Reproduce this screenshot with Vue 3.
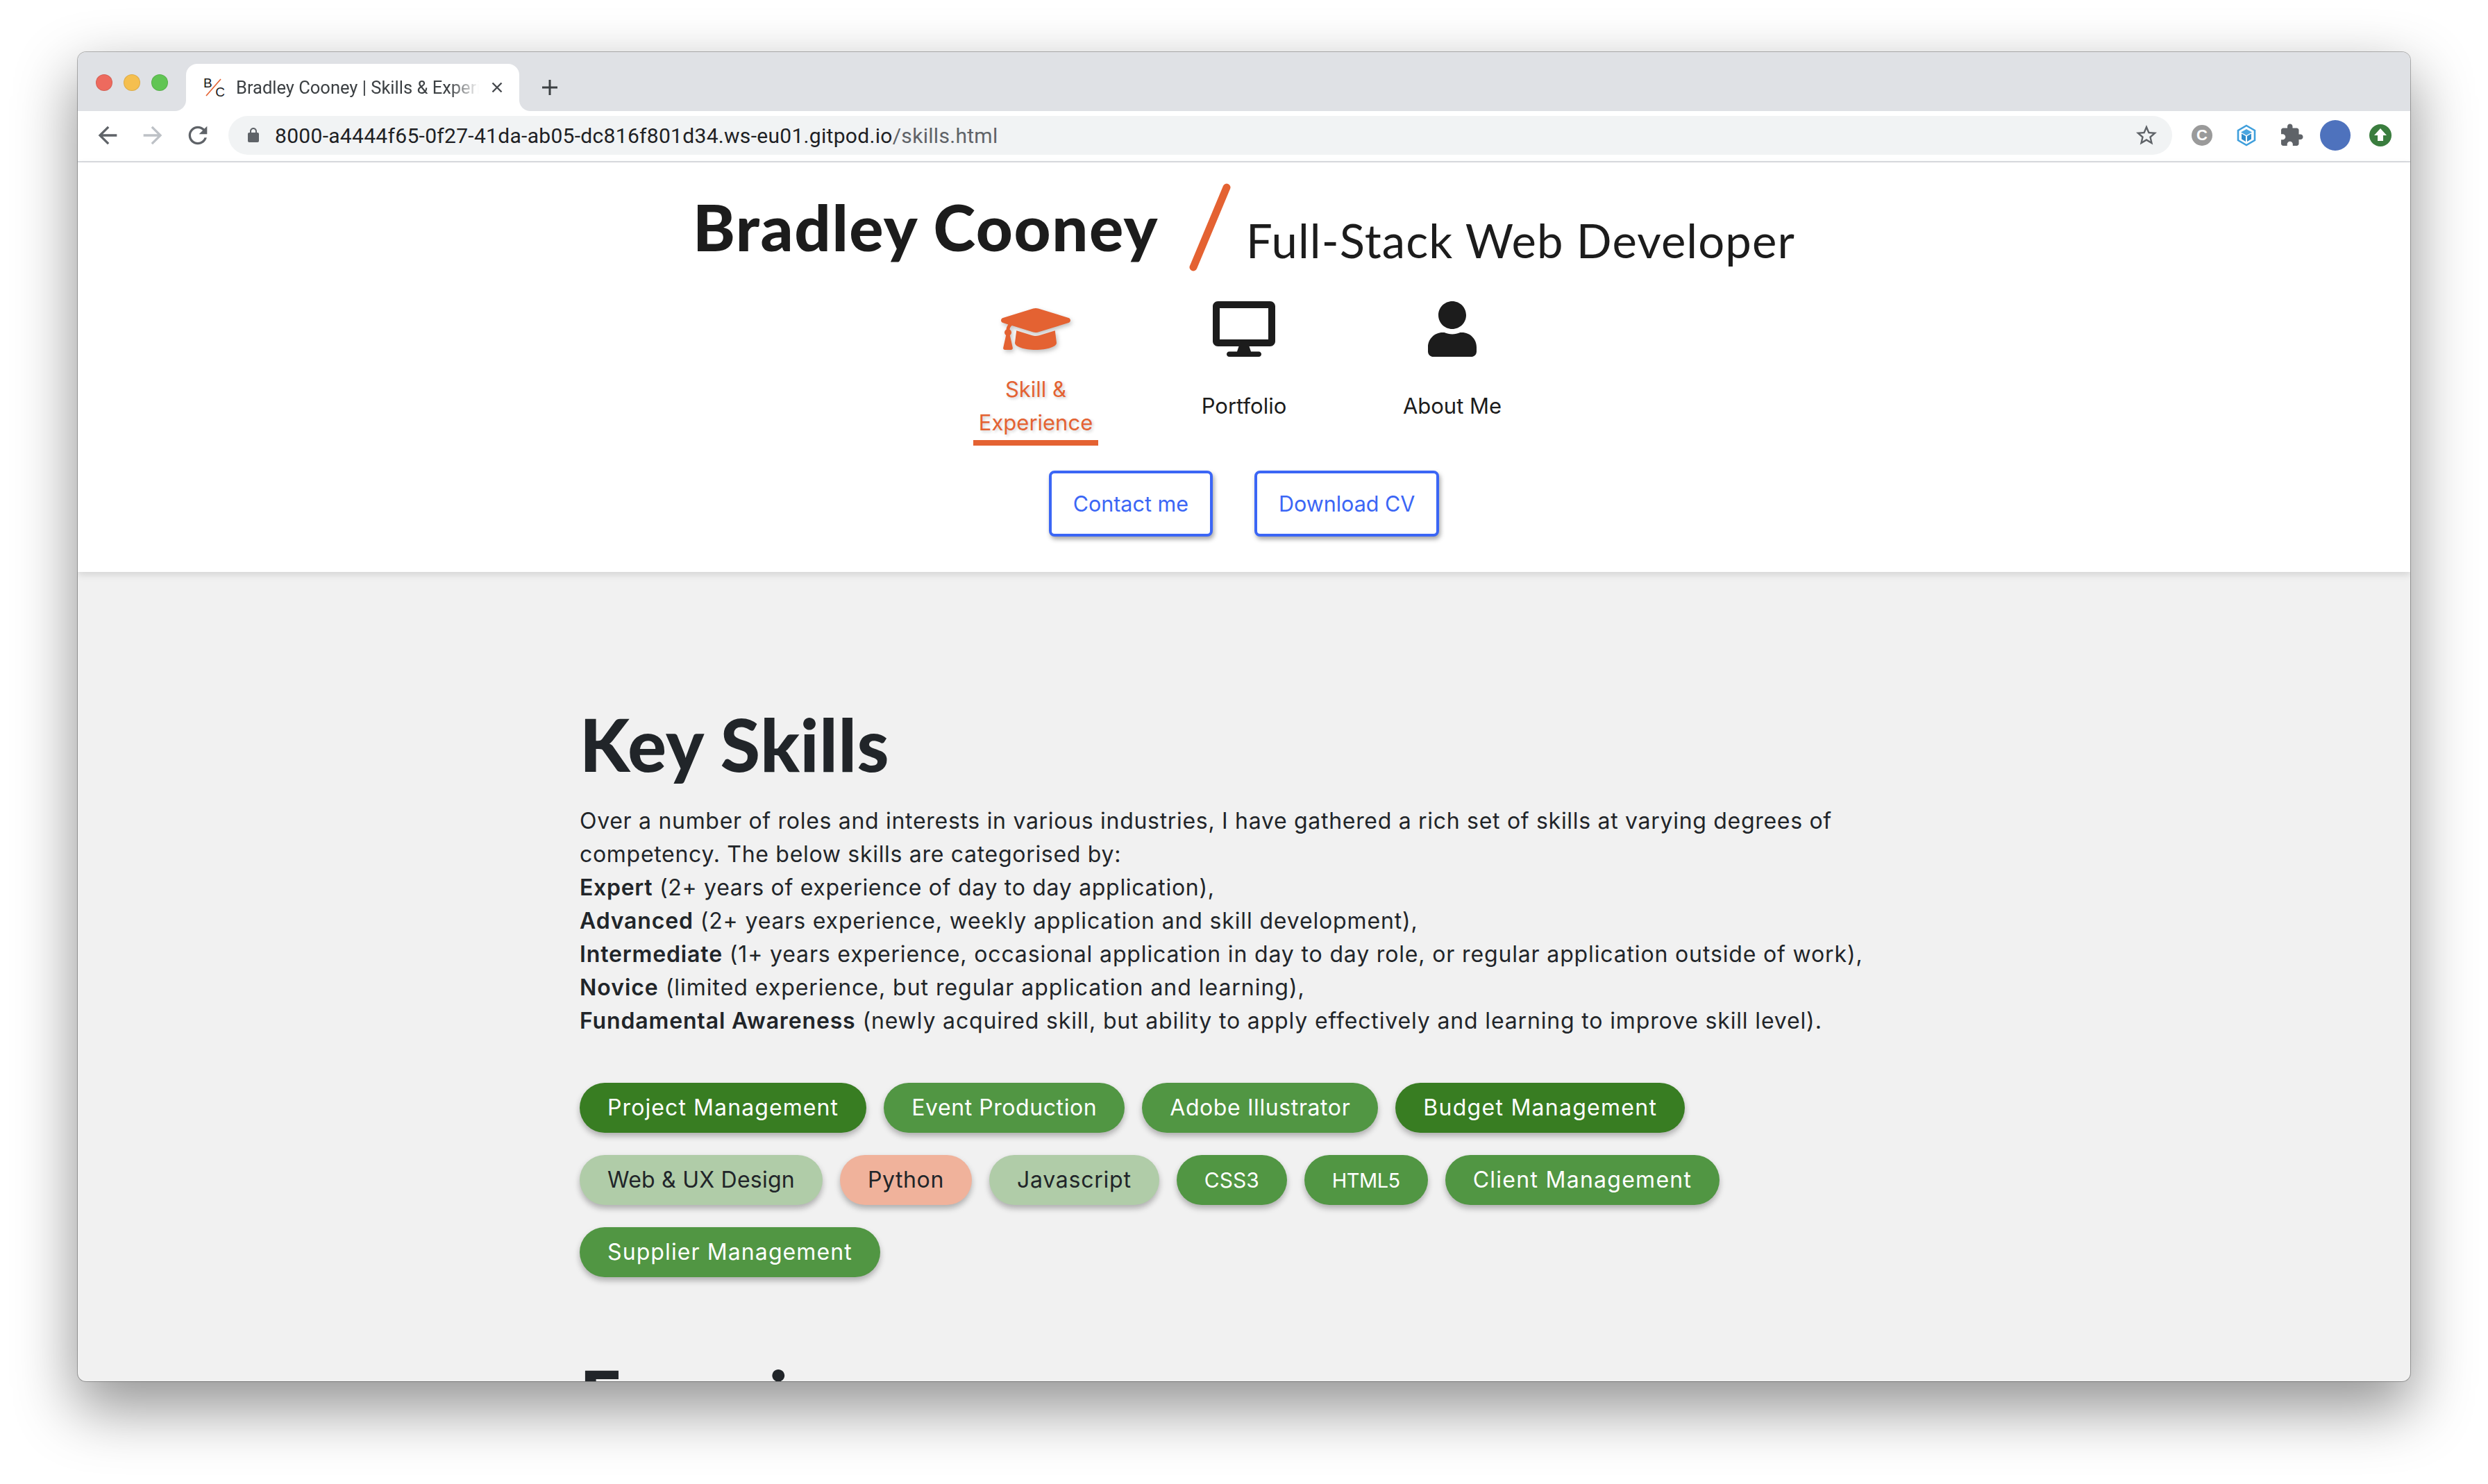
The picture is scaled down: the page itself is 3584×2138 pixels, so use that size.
<script setup>
const skills = [
  { name: 'Project Management', tone: 'dark', track: 1.1 },
  { name: 'Event Production', tone: 'mid', track: 0.57 },
  { name: 'Adobe Illustrator', tone: 'mid', track: 0.6 },
  { name: 'Budget Management', tone: 'dark', track: 1.27 },
  { name: 'Web & UX Design', tone: 'light', track: 0.24 },
  { name: 'Python', tone: 'peach', track: 0.6 },
  { name: 'Javascript', tone: 'light', track: 0.77 },
  { name: 'CSS3', tone: 'mid tight', track: 0 },
  { name: 'HTML5', tone: 'mid tighter', track: -0.5 },
  { name: 'Client Management', tone: 'mid', track: 1.27 },
  { name: 'Supplier Management', tone: 'mid', track: 1.1 }
]
</script>

<template>
  <div class="page">
    <div class="window">
      <div class="tabstrip">
        <div class="lights"><i class="red"></i><i class="yellow"></i><i class="green"></i></div>
        <div class="tab">
          <span class="favicon"><b class="fb">B</b><b class="fc">C</b><svg viewBox="0 0 30 30"><path d="M4 27 25 3" stroke="#e46232" stroke-width="1.6"/></svg></span>
          <span class="tab-title">Bradley Cooney | Skills &amp; Experience</span>
          <svg class="tab-x" viewBox="0 0 16 16"><path d="M1.500 1.500l13 13M14.500 1.500l-13 13" stroke="#45484d" stroke-width="2.400"/></svg>
        </div>
        <svg class="plus" viewBox="0 0 24 24"><path d="M12 1v22M1 12h22" stroke="#3c4043" stroke-width="3"/></svg>
      </div>
      <div class="toolbar">
        <svg class="nav-i" viewBox="0 0 24 24"><path fill="#5f6368" d="M20 11H7.83l5.59-5.59L12 4l-8 8 8 8 1.41-1.41L7.83 13H20v-2z"/></svg>
        <svg class="nav-i" viewBox="0 0 24 24"><path fill="#bdc1c6" d="M12 4l-1.41 1.41L16.17 11H4v2h12.17l-5.58 5.59L12 20l8-8z"/></svg>
        <svg class="nav-i" viewBox="0 0 24 24"><path fill="#5f6368" d="M17.65 6.35C16.2 4.9 14.21 4 12 4c-4.42 0-7.99 3.58-7.99 8s3.57 8 7.99 8c3.73 0 6.84-2.55 7.73-6h-2.08c-.82 2.33-3.04 4-5.65 4-3.31 0-6-2.69-6-6s2.69-6 6-6c1.66 0 3.14.69 4.22 1.78L13 11h7V4l-2.35 2.35z"/></svg>
        <div class="omni">
          <svg class="lock" viewBox="0 0 24 24"><path fill="#5f6368" d="M18 8h-1V6c0-2.76-2.24-5-5-5S7 3.24 7 6v2H6c-1.1 0-2 .9-2 2v10c0 1.1.9 2 2 2h12c1.1 0 2-.9 2-2V10c0-1.1-.9-2-2-2zM9 6c0-1.66 1.34-3 3-3s3 1.34 3 3v2H9V6z"/></svg>
          <span class="url">8000-a4444f65-0f27-41da-ab05-dc816f801d34.ws-eu01.gitpod.io<em>/skills.html</em></span>
          <svg class="star" viewBox="0 0 24 24"><path fill="#5f6368" d="M22 9.24l-7.19-.62L12 2 9.19 8.63 2 9.24l5.46 4.73L5.82 21 12 17.27 18.18 21l-1.63-7.03L22 9.24zM12 15.4l-3.76 2.27 1-4.28-3.32-2.88 4.38-.38L12 6.1l1.71 4.04 4.38.38-3.32 2.88 1 4.28L12 15.4z"/></svg>
        </div>
        <div class="exts">
          <span class="ext-c">C</span>
          <svg class="ext-g" viewBox="0 0 32 32">
            <path d="M16 2 28 9v14l-12 7-12-7V9z" fill="#fff" stroke="#3f9fdc" stroke-width="2.6"/>
            <path d="M16 7l8 4.5-8 4.5-8-4.5z" fill="#4ba6e0"/>
            <path d="M9 13.5l6 3.4V25l-6-3.4zM17 17l6-3.4v8L17 25z" fill="#2f8ccb"/>
          </svg>
          <svg class="ext-p" viewBox="0 0 24 24"><path fill="#5f6368" d="M20.5 11H19V7c0-1.100-.9-2-2-2h-4V3.500C13 2.120 11.880 1 10.500 1S8 2.120 8 3.500V5H4c-1.100 0-1.990.9-1.990 2v3.800H3.500c1.490 0 2.700 1.210 2.700 2.700s-1.210 2.700-2.700 2.700H2V20c0 1.100.9 2 2 2h3.800v-1.500c0-1.490 1.210-2.700 2.700-2.700 1.490 0 2.700 1.210 2.700 2.700V22H17c1.100 0 2-.9 2-2v-4h1.500c1.380 0 2.500-1.120 2.500-2.500S21.880 11 20.500 11z"/></svg>
          <span class="avatar"></span>
          <svg class="ext-up" viewBox="0 0 32 32"><circle cx="16" cy="16" r="16" fill="#3a7d3e"/><path d="M16 6l9 10h-5v8h-8v-8H7z" fill="#fff"/></svg>
        </div>
      </div>
      <header class="site-head">
        <div class="brand">
          <h1>Bradley Cooney</h1>
          <svg class="slash" viewBox="0 0 64 128"><path d="M9 121 57 6" stroke="#e46232" stroke-width="11" stroke-linecap="round"/></svg>
          <h2>Full-Stack Web Developer</h2>
        </div>
        <nav class="site-nav">
          <a class="nav-item active">
            <svg class="ico" viewBox="0 0 640 512"><path d="M622.34 153.2L343.4 67.5c-15.2-4.67-31.6-4.67-46.79 0L17.66 153.2c-23.54 7.23-23.54 38.36 0 45.59l48.63 14.94c-10.67 13.19-17.23 29.28-17.88 46.9C38.78 266.15 32 276.11 32 288c0 10.78 5.68 19.85 13.86 25.65L20.33 428.53C18.11 438.52 25.71 448 35.94 448h56.11c10.24 0 17.84-9.48 15.62-19.47L82.14 313.65C90.32 307.85 96 298.78 96 288c0-11.57-6.47-21.25-15.66-26.87.76-15.02 8.44-28.3 20.69-36.72L296.6 284.5c9.06 2.78 26.44 6.25 46.79 0l278.95-85.7c23.55-7.24 23.55-38.36 0-45.6zM352.79 315.09c-28.53 8.76-52.84 3.92-65.59 0l-145.02-44.55L128 384c0 35.35 85.96 64 192 64s192-28.65 192-64l-14.18-113.47-145.03 44.56z"/></svg>
            <span class="lbl">Skill &amp; Experience</span>
          </a>
          <a class="nav-item">
            <svg class="ico" viewBox="0 0 576 512"><path d="M528 0H48C21.5 0 0 21.5 0 48v320c0 26.5 21.5 48 48 48h192l-16 48h-72c-13.3 0-24 10.7-24 24s10.7 24 24 24h272c13.3 0 24-10.7 24-24s-10.700-24-24-24h-72l-16-48h192c26.5 0 48-21.5 48-48V48c0-26.5-21.5-48-48-48zm-16 352H64V64h448v288z"/></svg>
            <span class="lbl">Portfolio</span>
          </a>
          <a class="nav-item">
            <svg class="ico" viewBox="0 0 448 512"><path d="M224 256c70.7 0 128-57.3 128-128S294.7 0 224 0 96 57.3 96 128s57.3 128 128 128zm89.6 32h-16.7c-22.2 10.2-46.9 16-72.9 16s-50.6-5.8-72.9-16h-16.7C60.2 288 0 348.2 0 422.4V464c0 26.5 21.5 48 48 48h352c26.5 0 48-21.5 48-48v-41.6c0-74.2-60.2-134.4-134.4-134.4z"/></svg>
            <span class="lbl">About Me</span>
          </a>
        </nav>
        <div class="cta">
          <a class="btn">Contact me</a>
          <a class="btn">Download CV</a>
        </div>
      </header>
      <main class="content">
        <h2 class="section-title">Key Skills</h2>
        <p class="intro">
          Over a number of roles and interests in various industries, I have gathered a rich set of skills at varying degrees of competency. The below skills are categorised by:<br>
          <strong>Expert</strong> (2+ years of experience of day to day application),<br>
          <span class="wide">
            <strong>Advanced</strong> (2+ years experience, weekly application and skill development),<br>
            <strong>Intermediate</strong> (1+ years experience, occasional application in day to day role, or regular application outside of work),<br>
          </span>
          <span class="wider"><strong>Novice</strong> (limited experience, but regular application and learning),</span><br>
          <span class="wide"><strong>Fundamental Awareness</strong> (newly acquired skill, but ability to apply effectively and learning to improve skill level).</span>
        </p>
        <div class="pills">
          <span v-for="s in skills" :key="s.name" class="pill" :class="s.tone" :style="{ letterSpacing: s.track + 'px' }">{{ s.name }}</span>
        </div>
        <h2 class="section-title next">Experience</h2>
      </main>
    </div>
  </div>
</template>

<style>
html, body { margin: 0; background: #fff; }
</style>

<style scoped>
.page { width: 3584px; height: 2138px; padding: 75px 112px 148px; box-sizing: border-box; overflow: hidden; background: #fff; font-family: Inter, "Liberation Sans", sans-serif; }
.window { width: 3360px; height: 1915px; border-radius: 12px; overflow: hidden; background: #f1f1f1; box-shadow: 0 0 0 1px rgba(0,0,0,.28), 0 36px 86px 4px rgba(0,0,0,.42); display: flex; flex-direction: column; }
.tabstrip { flex: none; height: 85px; background: #dfe1e5; display: flex; align-items: flex-end; padding-left: 26px; box-sizing: border-box; }
.lights { display: flex; gap: 16px; align-self: flex-start; margin-top: 32px; width: 130px; }
.lights i { width: 24px; height: 24px; border-radius: 50%; box-sizing: border-box; border: 1px solid rgba(0,0,0,.1); }
.red { background: #ed6a5e; } .yellow { background: #f5bf4f; } .green { background: #61c554; }
.tab { position: relative; width: 480px; height: 68px; background: #fff; border-radius: 16px 16px 0 0; display: flex; align-items: center; padding: 0 24px 0 25px; box-sizing: border-box; }
.tab::before, .tab::after { content: ""; position: absolute; bottom: 0; width: 16px; height: 16px; }
.tab::before { left: -16px; background: radial-gradient(circle at 0 0, #dfe1e5 15.5px, #fff 16.5px); }
.tab::after { right: -16px; background: radial-gradient(circle at 100% 0, #dfe1e5 15.5px, #fff 16.5px); }
.favicon { position: relative; width: 30px; height: 30px; flex: none; font: 400 19px/1 "Liberation Sans", sans-serif; color: #1a1a1a; }
.favicon svg { position: absolute; inset: 0; }
.fb { position: absolute; left: 0; top: -1px; font-weight: 400; }
.fc { position: absolute; right: -1px; bottom: -1px; font-weight: 400; }
.tab-title { margin-left: 17px; width: 350px; white-space: nowrap; overflow: hidden; font: 400 25.5px/34px Roboto, sans-serif; color: #3c4043; -webkit-mask-image: linear-gradient(90deg, #000 88%, transparent); mask-image: linear-gradient(90deg, #000 88%, transparent); }
.tab-x { width: 16px; height: 16px; margin-left: auto; margin-right: 0; }
.plus { width: 24px; height: 24px; margin: 0 0 22px 32px; }
.toolbar { flex: none; height: 74px; box-sizing: border-box; background: #fff; border-bottom: 2px solid #dadce0; display: flex; align-items: center; padding: 0 0 2px 23px; }
.nav-i { width: 40px; height: 40px; flex: none; margin-right: 25px; }
.nav-i:nth-child(3) { margin-right: 0; }
.omni { margin-left: 24px; width: 2800px; height: 56px; border-radius: 28px; background: #f1f3f4; display: flex; align-items: center; padding: 0 19px 0 24px; box-sizing: border-box; }
.lock { width: 24px; height: 24px; flex: none; }
.url { margin-left: 19px; padding-top: 2px; font: 400 30px/1 Roboto, sans-serif; letter-spacing: .3px; color: #202124; white-space: nowrap; }
.url em { font-style: normal; color: #5f6368; }
.star { width: 36px; height: 36px; margin-left: auto; }
.exts { flex: 1; display: flex; align-items: center; padding-left: 28px; }
.ext-c { width: 30px; height: 30px; border-radius: 50%; background: #9a9a9a; color: #fff; font: 700 22px/30px "Liberation Sans", sans-serif; text-align: center; }
.ext-g { width: 32px; height: 32px; margin-left: 33px; }
.ext-p { width: 36px; height: 36px; margin-left: 31px; }
.avatar { width: 44px; height: 44px; border-radius: 50%; background: #4e72bd; margin-left: 23px; }
.ext-up { width: 32px; height: 32px; margin-left: 27px; }
.site-head { flex: none; height: 590px; box-sizing: border-box; background: #fff; box-shadow: 0 4px 10px rgba(0,0,0,.12); position: relative; display: flex; flex-direction: column; align-items: center; padding-top: 32px; }
.brand { display: flex; align-items: flex-start; height: 168px; }
.brand h1 { margin: 11px 0 0; font: 900 92px/100px Lato, sans-serif; color: #1c1c1c; white-space: nowrap; letter-spacing: 1.6px; }
.slash { width: 64px; height: 128px; margin: -2px 21px 0 41px; flex: none; }
.brand h2 { margin: 30px 0 0; font: 400 67px/100px Lato, sans-serif; letter-spacing: 1.1px; color: #1c1c1c; white-space: nowrap; }
.site-nav { display: flex; gap: 120px; }
.nav-item { width: 180px; display: flex; flex-direction: column; align-items: center; color: #1c1c1c; }
.ico { height: 80px; fill: currentColor; display: block; }
.lbl { margin-top: 23px; height: 96px; margin-bottom: 1px; display: flex; align-items: center; justify-content: center; text-align: center; font: 400 31px/48px Inter, sans-serif; }
.active { color: #e46232; border-bottom: 8px solid #e46232; }
.active .ico { filter: drop-shadow(2px 3px 3px rgba(0,0,0,.25)); }
.active .lbl { text-shadow: 2px 2px 4px rgba(0,0,0,.2); }
.cta { display: flex; gap: 60px; margin-top: 36px; }
.btn { height: 95px; padding: 2px 31px 0; display: flex; align-items: center; box-sizing: border-box; border: 4px solid #3b66f5; border-radius: 8px; color: #3b66f5; font: 400 30.500px/1 Inter, sans-serif; background: #fff; box-shadow: 2px 4px 6px rgba(0,0,0,.35); }
.content { width: 1914px; margin: 0 auto; padding-top: 181px; }
.section-title { margin: 0; font: 900 104px/134px Lato, sans-serif; letter-spacing: .7px; color: #212529; }
.intro { margin: 20px 0 0; font: 400 32px/48px Inter, sans-serif; letter-spacing: .7px; color: #212529; }
.intro strong { font-weight: 600; }
.wide { letter-spacing: .85px; }
.wider { letter-spacing: .97px; }
.pills { display: flex; flex-wrap: wrap; gap: 32px 25px; margin-top: 65px; }
.pill { height: 72px; padding: 0 40px; display: flex; align-items: center; border-radius: 36px; font: 400 32px/1 Inter, sans-serif; box-shadow: 0 5px 9px rgba(0,0,0,.28); }
.tight { font-size: 30px; }
.tighter { font-size: 29px; }
.dark { background: #387d22; color: #fff; }
.mid { background: #519643; color: #fff; }
.light { background: #b0cca8; color: #212529; }
.peach { background: #f0b29b; color: #212529; }
.next { margin-top: 104px; }
</style>
